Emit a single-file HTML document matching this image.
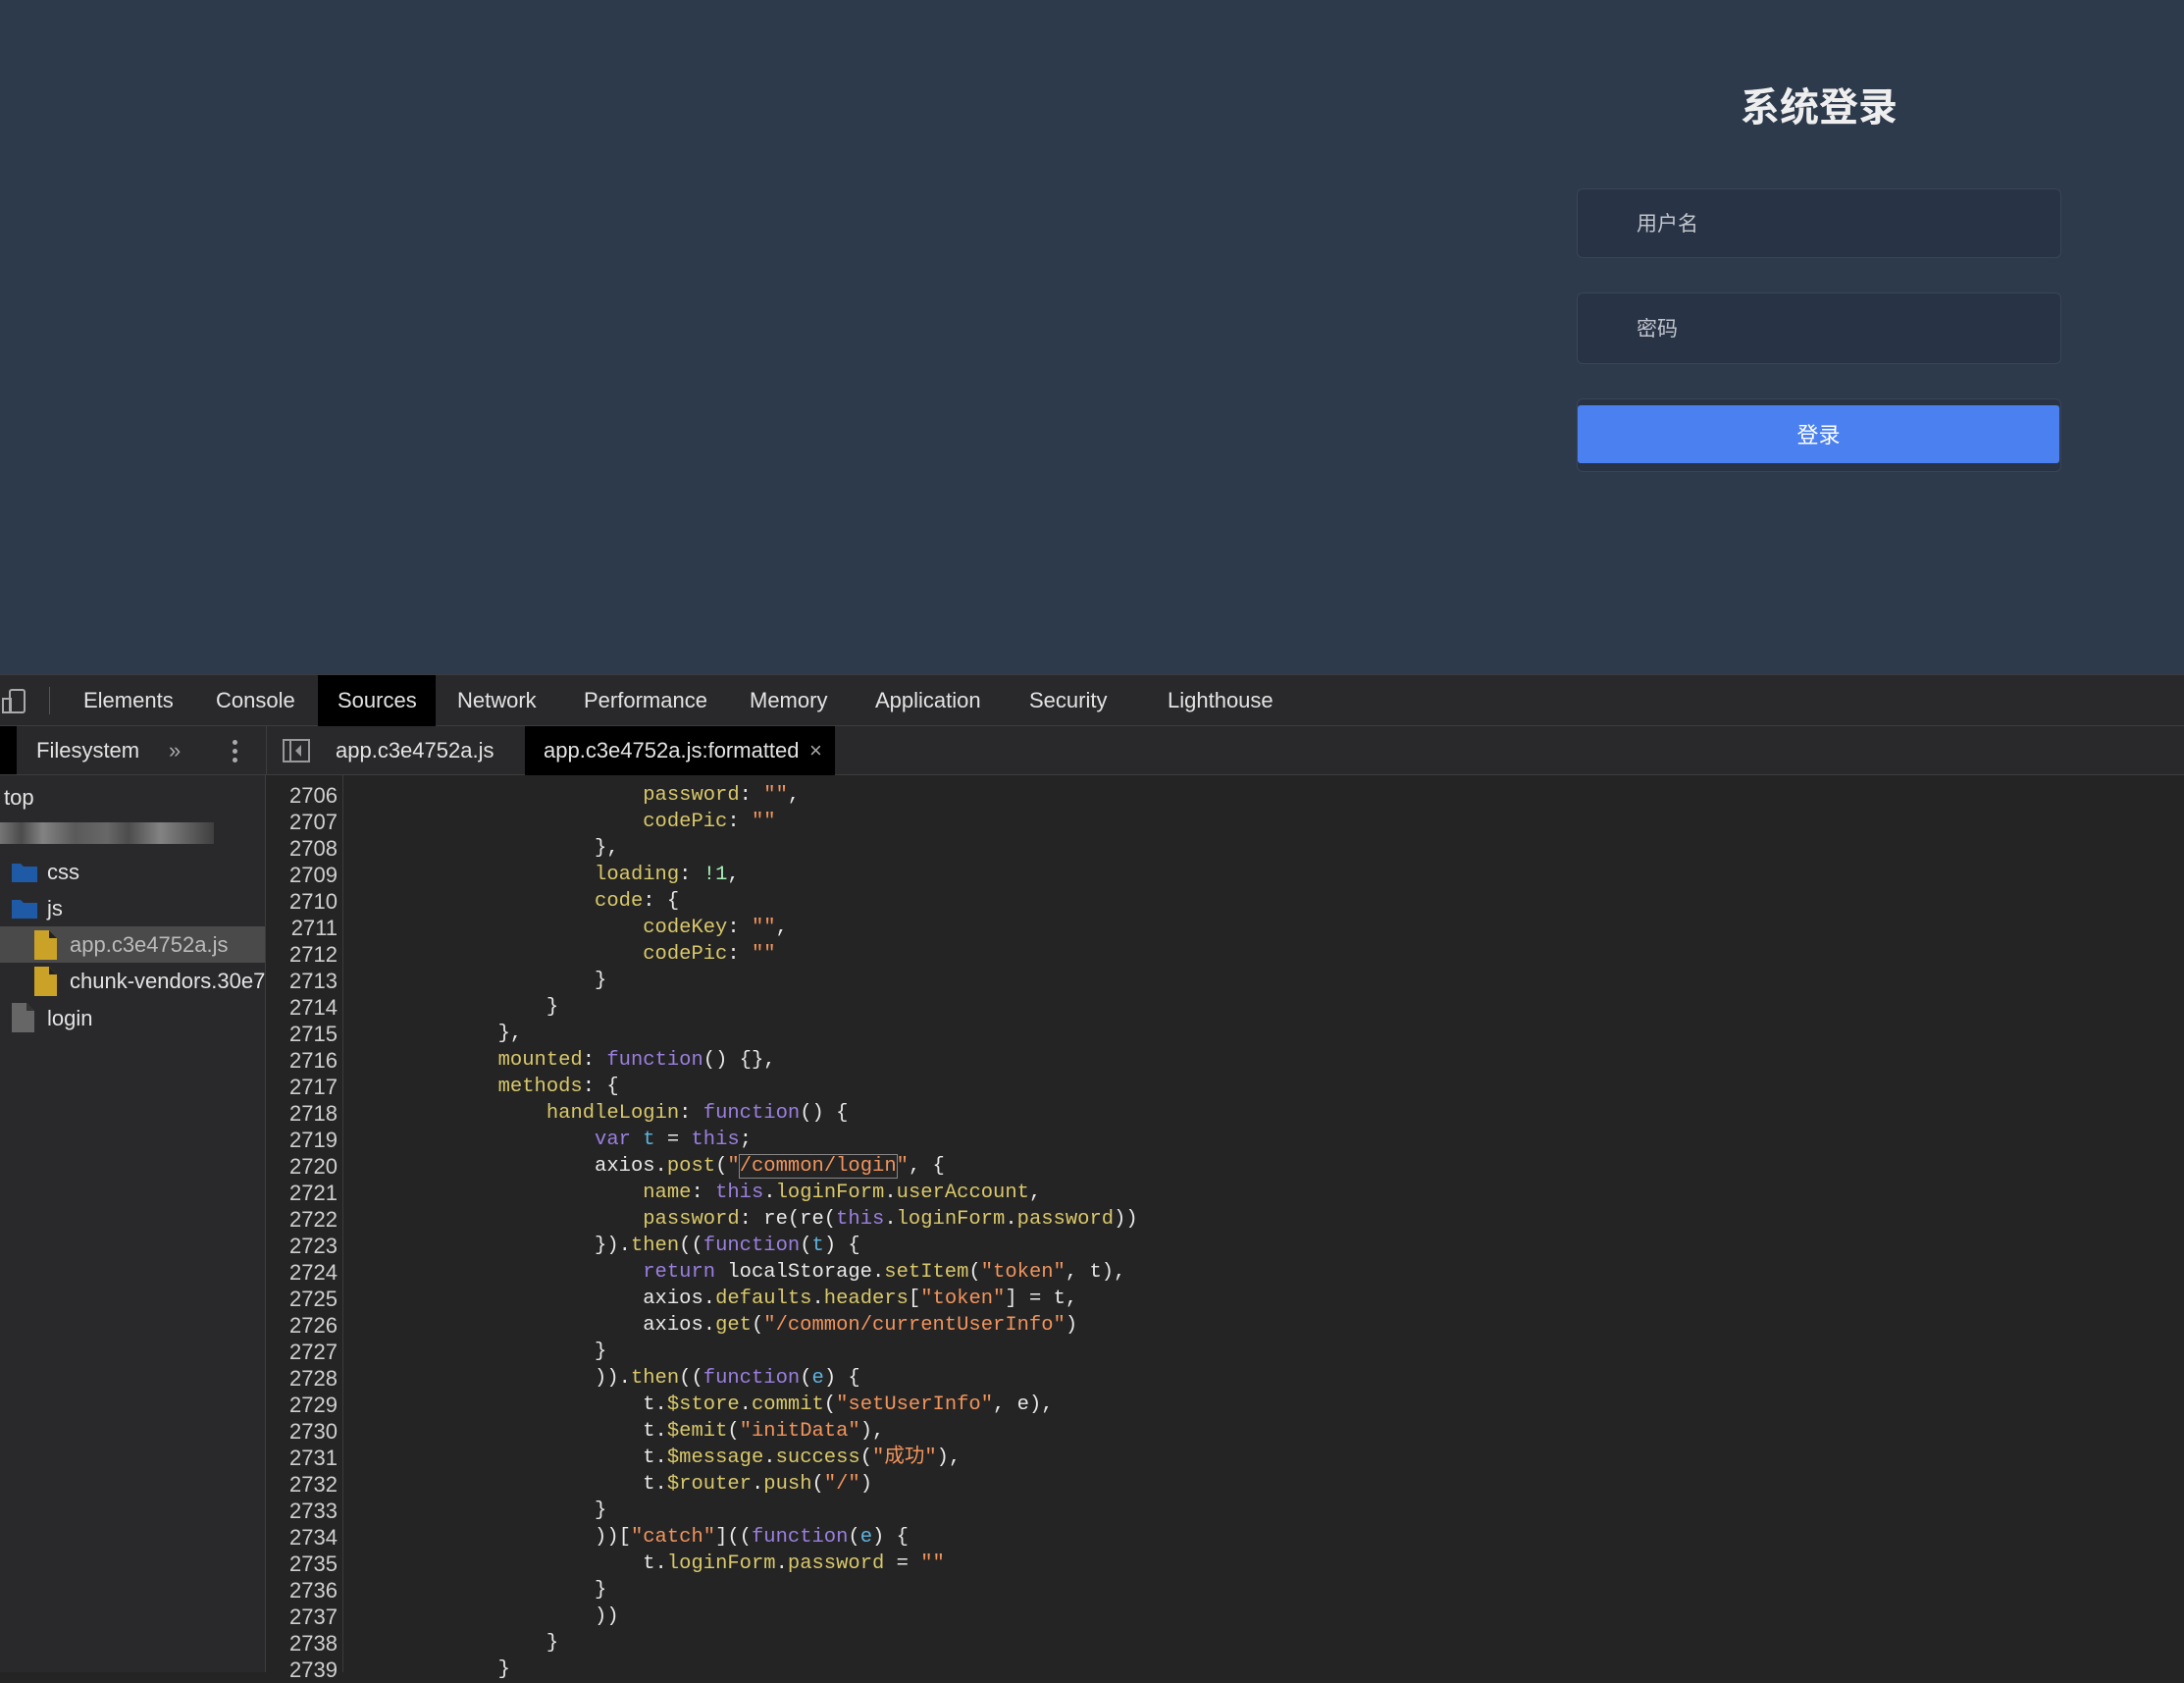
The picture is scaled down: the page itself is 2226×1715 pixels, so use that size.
<!DOCTYPE html>
<html><head><meta charset="utf-8"><style>
*{margin:0;padding:0;box-sizing:border-box}
body{width:2226px;height:1704px;overflow:hidden;background:#242424;position:relative;font-family:"Liberation Sans","Noto Sans CJK SC",sans-serif}
.top{position:absolute;left:0;top:0;width:2226px;height:687px;background:#2d3a4b}
.title{position:absolute;left:1607px;width:494px;top:77px;text-align:center;color:#eee;font-size:40px;font-weight:bold;font-family:"Noto Sans CJK SC",sans-serif}
.inp{position:absolute;left:1607px;width:494px;border:1px solid #3a4658;border-radius:6px;background:#283345;color:#c0c4cc;font-size:21px;padding-left:60px;font-family:"Noto Sans CJK SC",sans-serif}
.btnw{position:absolute;left:1607px;width:494px;top:406px;height:75px;border:1px solid #3a4658;border-radius:6px;background:#283345}
.btn{position:absolute;left:1608px;width:491px;top:413px;height:59px;background:#4a80f0;border-radius:3px;color:#fff;font-size:22px;text-align:center;line-height:59px;font-family:"Noto Sans CJK SC",sans-serif}
.tb{position:absolute;left:0;top:687px;width:2226px;height:53px;background:#29292c;border-top:1px solid #3c3c3c;border-bottom:1px solid #3c3c3c}
.t{position:absolute;top:0;line-height:52px;color:#e3e3e3;font-size:22px}
.r2{position:absolute;left:0;top:740px;width:2226px;height:50px;background:#29292c;border-bottom:1px solid #3c3c3c}
.r2 .t{line-height:50px}
.left{position:absolute;left:0;top:790px;width:271px;height:914px;background:#29292c;border-right:1px solid #3c3c3c}
.f{position:absolute;color:#e3e3e3;font-size:22px;line-height:30px}
.gut{position:absolute;left:272px;top:790px;width:78px;height:914px;border-right:1px solid #3a3a3a}
.ln{position:absolute;left:272px;width:72px;text-align:right;color:#d0d0d0;font-family:"Liberation Sans Narrow","Liberation Sans",sans-serif;font-size:22px;line-height:27px;margin-top:3px}
.cl{position:absolute;left:360px;white-space:pre;color:#e8e8e8;font-family:"Liberation Mono","Noto Sans CJK SC",monospace;font-size:20.5px;line-height:27px;margin-top:3px}
.k{color:#d9c86a}.s{color:#f2945c}.p{color:#9b7fe0}.b{color:#5eb3de}.n{color:#a8f2b8}
</style></head><body>
<div class="top"></div>
<div class="title">系统登录</div>
<div class="inp" style="top:192px;height:71px;line-height:69px">用户名</div>
<div class="inp" style="top:298px;height:73px;line-height:71px">密码</div>
<div class="btnw"></div>
<div class="btn">登录</div>

<div class="tb">
<svg style="position:absolute;left:2px;top:14px" width="28" height="26" viewBox="0 0 28 26"><rect x="8" y="1" width="15" height="23" rx="2" fill="none" stroke="#aaa" stroke-width="2"/><rect x="1" y="10" width="8" height="14" fill="none" stroke="#aaa" stroke-width="2"/></svg>
<div style="position:absolute;left:50px;top:12px;width:1px;height:28px;background:#555"></div>
<div class="t" style="left:85px">Elements</div>
<div class="t" style="left:220px">Console</div>
<div style="position:absolute;left:324px;top:0;width:120px;height:52px;background:#000"></div>
<div class="t" style="left:344px">Sources</div>
<div class="t" style="left:466px">Network</div>
<div class="t" style="left:595px">Performance</div>
<div class="t" style="left:764px">Memory</div>
<div class="t" style="left:892px">Application</div>
<div class="t" style="left:1049px">Security</div>
<div class="t" style="left:1190px">Lighthouse</div>
</div>

<div class="r2">
<div style="position:absolute;left:0;top:0;width:17px;height:49px;background:#000"></div>
<div class="t" style="left:37px">Filesystem</div>
<div class="t" style="left:172px;color:#aaa">»</div>
<div style="position:absolute;left:237px;top:14px;width:5px;height:5px;border-radius:3px;background:#aaa;box-shadow:0 9px 0 #aaa,0 18px 0 #aaa"></div>
<div style="position:absolute;left:271px;top:0;width:1px;height:50px;background:#3c3c3c"></div>
<svg style="position:absolute;left:288px;top:13px" width="28" height="24" viewBox="0 0 28 24"><rect x="1" y="1" width="26" height="22" fill="none" stroke="#999" stroke-width="2"/><line x1="8" y1="1" x2="8" y2="23" stroke="#999" stroke-width="2"/><path d="M19 6 L13 12 L19 18 Z" fill="#999"/></svg>
<div class="t" style="left:342px">app.c3e4752a.js</div>
<div style="position:absolute;left:535px;top:0;width:316px;height:50px;background:#000"></div>
<div class="t" style="left:554px">app.c3e4752a.js:formatted</div>
<div class="t" style="left:825px;color:#aaa">×</div>
</div>

<div class="left">
<div style="position:absolute;left:0;top:154px;width:270px;height:37px;background:#4a4a4a"></div>
</div>
<div class="f" style="left:4px;top:798px">top</div>
<div style="position:absolute;left:0;top:838px;width:218px;height:22px;background:linear-gradient(90deg,#888 0,#555 10%,#999 20%,#666 35%,#777 50%,#555 60%,#999 75%,#666 90%,#444 100%);opacity:.8"></div>
<svg style="position:absolute;left:12px;top:877px" width="26" height="22"><path d="M0 3h9l3 3h14v16H0z" fill="#1f5aa6"/></svg>
<div class="f" style="left:48px;top:874px">css</div>
<svg style="position:absolute;left:12px;top:914px" width="26" height="22"><path d="M0 3h9l3 3h14v16H0z" fill="#1f5aa6"/></svg>
<div class="f" style="left:48px;top:911px">js</div>
<svg style="position:absolute;left:35px;top:948px" width="23" height="30"><path d="M0 0h15l8 8v22H0z" fill="#c9a227"/><path d="M15 0v8h8" fill="#222"/></svg>
<div class="f" style="left:71px;top:948px;color:#bbb">app.c3e4752a.js</div>
<svg style="position:absolute;left:35px;top:985px" width="23" height="30"><path d="M0 0h15l8 8v22H0z" fill="#c9a227"/><path d="M15 0v8h8" fill="#222"/></svg>
<div class="f" style="left:71px;top:985px;width:200px;overflow:hidden;white-space:nowrap">chunk-vendors.30e7</div>
<svg style="position:absolute;left:12px;top:1022px" width="23" height="30"><path d="M0 0h15l8 8v22H0z" fill="#666"/><path d="M15 0v8h8" fill="#333"/></svg>
<div class="f" style="left:48px;top:1023px">login</div>

<div class="gut"></div>
<div class="ln" style="top:794px">2706</div><div class="ln" style="top:821px">2707</div><div class="ln" style="top:848px">2708</div><div class="ln" style="top:875px">2709</div><div class="ln" style="top:902px">2710</div><div class="ln" style="top:929px">2711</div><div class="ln" style="top:956px">2712</div><div class="ln" style="top:983px">2713</div><div class="ln" style="top:1010px">2714</div><div class="ln" style="top:1037px">2715</div><div class="ln" style="top:1064px">2716</div><div class="ln" style="top:1091px">2717</div><div class="ln" style="top:1118px">2718</div><div class="ln" style="top:1145px">2719</div><div class="ln" style="top:1172px">2720</div><div class="ln" style="top:1199px">2721</div><div class="ln" style="top:1226px">2722</div><div class="ln" style="top:1253px">2723</div><div class="ln" style="top:1280px">2724</div><div class="ln" style="top:1307px">2725</div><div class="ln" style="top:1334px">2726</div><div class="ln" style="top:1361px">2727</div><div class="ln" style="top:1388px">2728</div><div class="ln" style="top:1415px">2729</div><div class="ln" style="top:1442px">2730</div><div class="ln" style="top:1469px">2731</div><div class="ln" style="top:1496px">2732</div><div class="ln" style="top:1523px">2733</div><div class="ln" style="top:1550px">2734</div><div class="ln" style="top:1577px">2735</div><div class="ln" style="top:1604px">2736</div><div class="ln" style="top:1631px">2737</div><div class="ln" style="top:1658px">2738</div><div class="ln" style="top:1685px">2739</div>

<div class="cl" style="top:794px">                        <span class="k">password</span>: <span class="s">""</span>,</div>
<div class="cl" style="top:821px">                        <span class="k">codePic</span>: <span class="s">""</span></div>
<div class="cl" style="top:848px">                    },</div>
<div class="cl" style="top:875px">                    <span class="k">loading</span>: <span class="n">!1</span>,</div>
<div class="cl" style="top:902px">                    <span class="k">code</span>: {</div>
<div class="cl" style="top:929px">                        <span class="k">codeKey</span>: <span class="s">""</span>,</div>
<div class="cl" style="top:956px">                        <span class="k">codePic</span>: <span class="s">""</span></div>
<div class="cl" style="top:983px">                    }</div>
<div class="cl" style="top:1010px">                }</div>
<div class="cl" style="top:1037px">            },</div>
<div class="cl" style="top:1064px">            <span class="k">mounted</span>: <span class="p">function</span>() {},</div>
<div class="cl" style="top:1091px">            <span class="k">methods</span>: {</div>
<div class="cl" style="top:1118px">                <span class="k">handleLogin</span>: <span class="p">function</span>() {</div>
<div class="cl" style="top:1145px">                    <span class="p">var</span> <span class="b">t</span> = <span class="p">this</span>;</div>
<div class="cl" style="top:1172px">                    axios.<span class="k">post</span>(<span class="s">"<span style="outline:1px solid #888">/common/login</span>"</span>, {</div>
<div class="cl" style="top:1199px">                        <span class="k">name</span>: <span class="p">this</span>.<span class="k">loginForm</span>.<span class="k">userAccount</span>,</div>
<div class="cl" style="top:1226px">                        <span class="k">password</span>: re(re(<span class="p">this</span>.<span class="k">loginForm</span>.<span class="k">password</span>))</div>
<div class="cl" style="top:1253px">                    }).<span class="k">then</span>((<span class="p">function</span>(<span class="b">t</span>) {</div>
<div class="cl" style="top:1280px">                        <span class="p">return</span> localStorage.<span class="k">setItem</span>(<span class="s">"token"</span>, t),</div>
<div class="cl" style="top:1307px">                        axios.<span class="k">defaults</span>.<span class="k">headers</span>[<span class="s">"token"</span>] = t,</div>
<div class="cl" style="top:1334px">                        axios.<span class="k">get</span>(<span class="s">"/common/currentUserInfo"</span>)</div>
<div class="cl" style="top:1361px">                    }</div>
<div class="cl" style="top:1388px">                    )).<span class="k">then</span>((<span class="p">function</span>(<span class="b">e</span>) {</div>
<div class="cl" style="top:1415px">                        t.<span class="k">$store</span>.<span class="k">commit</span>(<span class="s">"setUserInfo"</span>, e),</div>
<div class="cl" style="top:1442px">                        t.<span class="k">$emit</span>(<span class="s">"initData"</span>),</div>
<div class="cl" style="top:1469px">                        t.<span class="k">$message</span>.<span class="k">success</span>(<span class="s">"成功"</span>),</div>
<div class="cl" style="top:1496px">                        t.<span class="k">$router</span>.<span class="k">push</span>(<span class="s">"/"</span>)</div>
<div class="cl" style="top:1523px">                    }</div>
<div class="cl" style="top:1550px">                    ))[<span class="s">"catch"</span>]((<span class="p">function</span>(<span class="b">e</span>) {</div>
<div class="cl" style="top:1577px">                        t.<span class="k">loginForm</span>.<span class="k">password</span> = <span class="s">""</span></div>
<div class="cl" style="top:1604px">                    }</div>
<div class="cl" style="top:1631px">                    ))</div>
<div class="cl" style="top:1658px">                }</div>
<div class="cl" style="top:1685px">            }</div>
</body></html>
